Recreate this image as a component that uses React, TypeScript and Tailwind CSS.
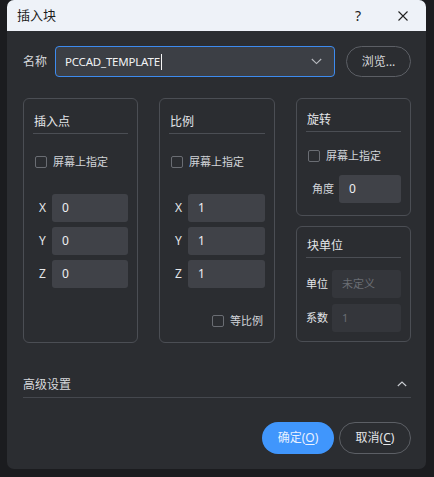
import React from "react";

const font = "font-['Noto_Sans','Noto_Sans_CJK_SC',sans-serif]";

function Checkbox({ label }: { label: string }) {
  return (
    <div className="flex items-center h-[17px]">
      <span className="ml-[2px] w-[12px] h-[12px] rounded-[2px] border border-[#6a6d73] box-border" />
      <span className="ml-[6px] text-[11px] leading-[17px] text-[#d2d5d9]">{label}</span>
    </div>
  );
}

function XYZ({ value }: { value: string }) {
  return (
    <div className="flex flex-col gap-[5px] mt-[24px]">
      {["X", "Y", "Z"].map((k) => (
        <div key={k} className="flex items-center h-[28px]">
          <span className="w-[19px] text-center text-[12px] text-[#e4e6e9]">{k}</span>
          <div className="flex-1 h-[28px] rounded-[3px] bg-[#404248] flex items-center pl-[10px] text-[12px] text-[#eef0f2]">
            {value}
          </div>
        </div>
      ))}
    </div>
  );
}

export default function App() {
  return (
    <div className={`w-[434px] h-[477px] bg-[#1b1c1f] pl-[7px] ${font}`}>
      <div className="w-[419px] h-[469px] rounded-[7px] overflow-hidden bg-[#2b2d31] flex flex-col">
        {/* Title bar */}
        <div className="h-[31px] bg-[#eef2f8] flex items-center pl-[10px] pr-[18px] shrink-0">
          <span className="text-[13px] text-[#1b1b1b]">插入块</span>
          <div className="flex-1" />
          <span className="text-[14px] text-[#222] w-[16px] text-center mr-[32px]">?</span>
          <svg width="10" height="10" viewBox="0 0 10 10">
            <path d="M0.5 0.5 L9.5 9.5 M9.5 0.5 L0.5 9.5" stroke="#222" strokeWidth="1.1" fill="none" />
          </svg>
        </div>

        <div className="flex-1 flex flex-col pl-[16px] pr-[15px]">
          {/* Name row */}
          <div className="flex items-center mt-[15px] h-[31px]">
            <span className="w-[32px] text-[12px] text-[#d6d8dc]">名称</span>
            <div className="w-[280px] h-[31px] rounded-[4px] border border-[#3d8bef] bg-[#3c3f45] flex items-center pl-[9px] pr-[8px] box-border">
              <span className="text-[11.5px] text-[#f0f2f4] tracking-[-0.2px]">PCCAD_TEMPLATE</span>
              <span className="ml-[1px] w-[1px] h-[16px] bg-[#f5f5f5]" />
              <div className="flex-1" />
              <svg width="11" height="7" viewBox="0 0 11 7" className="mr-[4px]">
                <path d="M0.8 1 L5.5 5.6 L10.2 1" stroke="#b9bcc1" strokeWidth="1.1" fill="none" />
              </svg>
            </div>
            <div className="ml-[11px] w-[65px] h-[31px] rounded-full border border-[#5c5f65] flex items-center justify-center text-[12px] text-[#d6d8dc] box-border">
              浏览...
            </div>
          </div>

          {/* Panels */}
          <div className="flex mt-[21px] gap-[21px] w-[388px]">
            {/* 插入点 */}
            <div className="w-[115px] h-[245px] rounded-[6px] border border-[#4b4e54] px-[9px] box-border">
              <div className="mt-[14px] leading-[17px] pb-[3px] pl-[1px] border-b border-[#4b4e54] text-[12px] text-[#e4e6e9]">插入点</div>
              <div className="mt-[19px]">
                <Checkbox label="屏幕上指定" />
              </div>
              <XYZ value="0" />
            </div>

            {/* 比例 */}
            <div className="w-[116px] h-[245px] rounded-[6px] border border-[#4b4e54] px-[9px] box-border flex flex-col">
              <div className="mt-[14px] leading-[17px] pb-[3px] pl-[1px] border-b border-[#4b4e54] text-[12px] text-[#e4e6e9]">比例</div>
              <div className="mt-[19px]">
                <Checkbox label="屏幕上指定" />
              </div>
              <XYZ value="1" />
              <div className="mt-[24px] flex justify-end pr-[2px]">
                <Checkbox label="等比例" />
              </div>
            </div>

            {/* Right column */}
            <div className="w-[115px] flex flex-col gap-[10px]">
              <div className="h-[118px] rounded-[6px] border border-[#4b4e54] px-[9px] box-border">
                <div className="mt-[12px] leading-[17px] pb-[3px] pl-[1px] border-b border-[#4b4e54] text-[12px] text-[#e4e6e9]">旋转</div>
                <div className="mt-[15px]">
                  <Checkbox label="屏幕上指定" />
                </div>
                <div className="flex items-center mt-[11px] h-[28px]">
                  <span className="flex-1 text-right pr-[5px] text-[11px] text-[#d2d5d9]">角度</span>
                  <div className="w-[62px] h-[28px] rounded-[3px] bg-[#404248] flex items-center pl-[10px] text-[12px] text-[#eef0f2]">0</div>
                </div>
              </div>

              <div className="h-[116px] rounded-[6px] border border-[#4b4e54] px-[9px] box-border">
                <div className="mt-[10px] leading-[17px] pb-[3px] pl-[1px] border-b border-[#4b4e54] text-[12px] text-[#e4e6e9]">块单位</div>
                <div className="flex flex-col gap-[6px] mt-[12px]">
                  <div className="flex items-center h-[28px]">
                    <span className="flex-1 text-[11px] text-[#e4e6e9]">单位</span>
                    <div className="w-[69px] h-[28px] rounded-[3px] bg-[#34363b] flex items-center pl-[10px] text-[11px] text-[#6a6d73]">未定义</div>
                  </div>
                  <div className="flex items-center h-[28px]">
                    <span className="flex-1 text-[11px] text-[#e4e6e9]">系数</span>
                    <div className="w-[69px] h-[28px] rounded-[3px] bg-[#34363b] flex items-center pl-[10px] text-[11px] text-[#6a6d73]">1</div>
                  </div>
                </div>
              </div>
            </div>
          </div>

          {/* Advanced */}
          <div className="mt-[31px] h-[22px] flex items-center border-b border-[#45484e] pb-[1px] box-content">
            <span className="text-[12px] text-[#d6d8dc]">高级设置</span>
            <div className="flex-1" />
            <svg width="10" height="6" viewBox="0 0 10 6" className="mr-[4px] mb-[2px]">
              <path d="M0.8 5 L5 1 L9.2 5" stroke="#c8cbd0" strokeWidth="1.1" fill="none" />
            </svg>
          </div>

          {/* Buttons */}
          <div className="mt-[24px] flex justify-end gap-[5px]">
            <div className="w-[72px] h-[32px] rounded-full bg-[#4096fc] flex items-center justify-center text-[12px] text-[#e9f1ff]">
              确定(<span className="underline underline-offset-2">O</span>)
            </div>
            <div className="w-[72px] h-[32px] rounded-full border border-[#5c5f65] box-border flex items-center justify-center text-[12px] text-[#e4e6e9]">
              取消(<span className="underline underline-offset-2">C</span>)
            </div>
          </div>
        </div>
      </div>
    </div>
  );
}
